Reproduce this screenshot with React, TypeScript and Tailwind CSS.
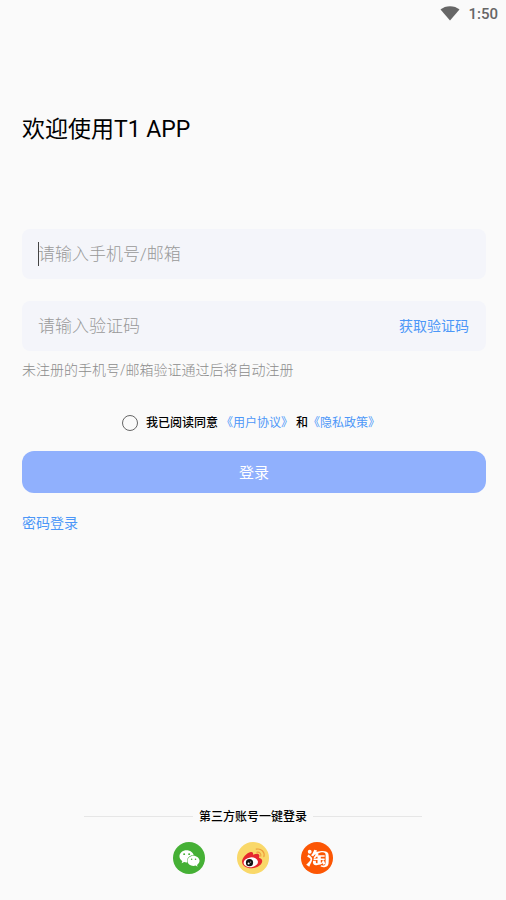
import { useState } from "react";
import { AiOutlineTaobao } from "react-icons/ai";
import { FaWeixin } from "react-icons/fa";

function StatusBar() {
  return (
    <header className="flex h-7 items-center justify-end gap-2 pr-2 text-[#666666]">
      <svg className="h-4 w-5" viewBox="0 0 20 16" aria-hidden="true">
        <path d="M0.5 3.6C3 1.4 6.3 0.2 10 0.2s7 1.2 9.5 3.4L10 14.6z" fill="currentColor" />
      </svg>
      <span className="text-[15px] leading-5 font-medium">1:50</span>
    </header>
  );
}

function WeiboLogo() {
  return (
    <svg className="size-8" viewBox="0 0 32 32" aria-hidden="true">
      <circle cx="16" cy="16" r="16" fill="#f9d869" />
      <path
        d="M5 19.8c0-3.600 4.700-9 8.700-9.700 2.300-.4 2.700 1.100 2.200 2.700 2.600-1.100 6.300-1.700 6.500.8.100.800-.3 1.600-.5 2.200 2 .5 3.300 1.500 3.300 3.300 0 3.700-5 7.200-10.600 7.200-5.400 0-9.600-2.700-9.600-6.500z"
        fill="#e6282e"
      />
      <ellipse cx="13.8" cy="20.3" rx="7.2" ry="4.9" fill="#fff" transform="rotate(-7 13.8 20.3)" />
      <circle cx="12.5" cy="20.7" r="3.6" fill="#111" />
      <circle cx="11.6" cy="21.4" r="1" fill="#fff" />
      <circle cx="13.7" cy="19.9" r="0.5" fill="#fff" />
      <path d="M19.2 7.2c4.900-1.100 9 2.600 7.700 7.500" fill="none" stroke="#ee9c3c" strokeWidth="1.2" strokeLinecap="round" />
      <path d="M19.8 10.3c2.600-.6 4.600 1.300 4 3.800" fill="none" stroke="#ee9c3c" strokeWidth="1.1" strokeLinecap="round" />
    </svg>
  );
}

export default function App() {
  const [agreed, setAgreed] = useState(false);

  return (
    <div className="flex min-h-screen flex-col bg-[#fafafa] font-[Roboto,'Noto_Sans_CJK_SC',sans-serif] text-black">
      <StatusBar />
      <main className="flex flex-1 flex-col pr-5 pl-[22px]">
        <h1 className="mt-[86px] text-[23px] leading-8">欢迎使用T1 APP</h1>

        <form className="mt-[83px] flex flex-col" onSubmit={(e) => e.preventDefault()}>
          <div className="relative flex h-[50px] items-center rounded-lg bg-[#f4f5fa]">
            <input
              type="text"
              aria-label="手机号/邮箱"
              placeholder="请输入手机号/邮箱"
              className="h-full w-full bg-transparent px-4 text-[17px] font-light outline-none placeholder:text-[#999999]"
            />
            <span className="absolute left-4 h-6 w-px bg-[#444444]" />
          </div>

          <div className="mt-[22px] flex h-[50px] items-center rounded-lg bg-[#f4f5fa] pr-[17px]">
            <input
              type="text"
              aria-label="验证码"
              placeholder="请输入验证码"
              className="h-full min-w-0 flex-1 bg-transparent px-4 text-[17px] font-light outline-none placeholder:text-[#999999]"
            />
            <button type="button" className="text-[14px] leading-5 text-[#4c97f8]">
              获取验证码
            </button>
          </div>
          <p className="mt-[9px] text-[14px] leading-5 font-light text-[#8c8c8c]">
            未注册的手机号/邮箱验证通过后将自动注册
          </p>

          <div className="mt-8 flex items-center justify-center pr-1.5 text-[12px] leading-[22px]">
            <label className="flex items-center gap-2">
              <input
                type="checkbox"
                checked={agreed}
                onChange={(e) => setAgreed(e.target.checked)}
                className="size-4 appearance-none rounded-full border border-[#666666] checked:bg-[#4c97f8]"
              />
              <span className="font-medium">我已阅读同意</span>
            </label>
            <a href="#terms" className="mx-[3px] text-[#4c97f8]">《用户协议》</a>
            <span className="font-medium">和</span>
            <a href="#privacy" className="text-[#4c97f8]">《隐私政策》</a>
          </div>

          <button type="submit" className="mt-[17px] h-[42px] rounded-xl bg-[#90b0fd] pt-[3px] text-[15px] text-white">
            登录
          </button>
        </form>
        <a href="#password" className="mt-5 self-start text-[14px] leading-5 text-[#4c97f8]">
          密码登录
        </a>
      </main>

      <footer className="flex flex-col items-center pb-[26px]">
        <div className="flex w-2/3 items-center gap-[6px]">
          <span className="h-px flex-1 bg-[#e6e6e6]" />
          <span className="pt-0.5 text-[12px] leading-5 font-medium">第三方账号一键登录</span>
          <span className="h-px flex-1 bg-[#e6e6e6]" />
        </div>
        <div className="mt-[15px] flex gap-8">
          <button type="button" aria-label="微信" className="flex size-8 items-center justify-center rounded-full bg-[#45b035] text-white">
            <FaWeixin className="size-[21px]" />
          </button>
          <button type="button" aria-label="微博" className="size-8 rounded-full">
            <WeiboLogo />
          </button>
          <button type="button" aria-label="淘宝" className="flex size-8 items-center justify-center rounded-full bg-[#fc5604] text-white">
            <AiOutlineTaobao className="size-[29px]" />
          </button>
        </div>
      </footer>
    </div>
  );
}
